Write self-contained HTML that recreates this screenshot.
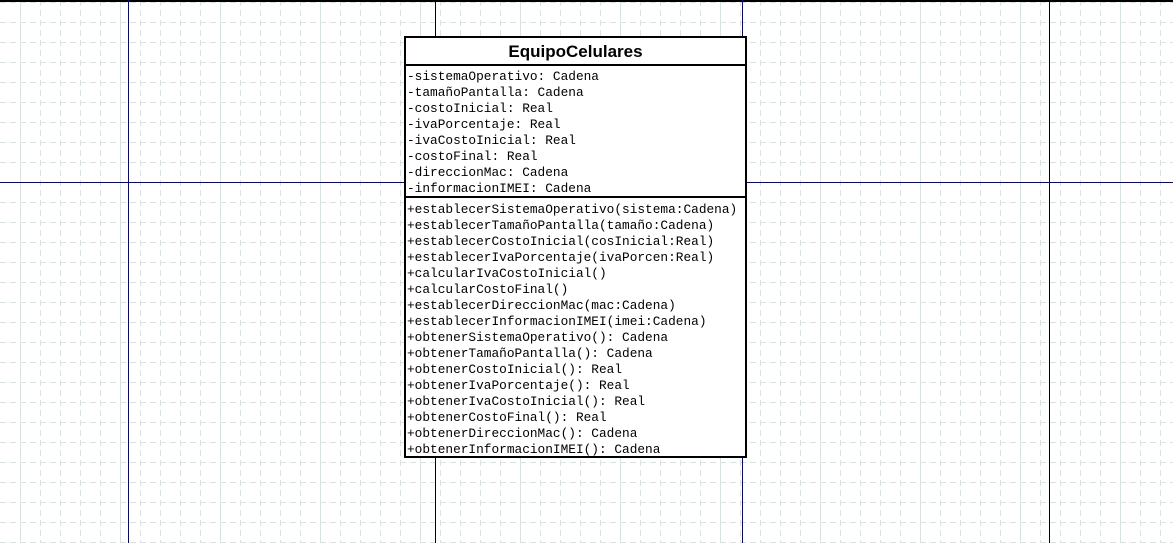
<!DOCTYPE html>
<html><head><meta charset="utf-8"><style>
html,body{margin:0;padding:0;background:#fff;width:1173px;height:543px;overflow:hidden;position:relative}
svg{position:absolute;left:0;top:0}
.box{position:absolute;left:404px;top:36px;width:339px;height:418px;border:2px solid #000;background:#fff}
.title{height:26px;border-bottom:2px solid #000;text-align:center;font:bold 17px "Liberation Sans",sans-serif;line-height:27px;color:#000}
.sec{font:12.8px "Liberation Mono",monospace;color:#000;line-height:16px;padding-left:1px;white-space:pre}
.attr{height:127px;padding-top:3px;border-bottom:2px solid #000;overflow:visible}
.meth{padding-top:4px}
</style></head><body>
<svg width="1173" height="543">
<g stroke="#d3e5e1" stroke-width="1" stroke-dasharray="6,4">
<path d="M0 2.5H1173M0 22.5H1173M0 42.5H1173M0 62.5H1173M0 82.5H1173M0 102.5H1173M0 122.5H1173M0 142.5H1173M0 162.5H1173M0 202.5H1173M0 222.5H1173M0 242.5H1173M0 262.5H1173M0 282.5H1173M0 302.5H1173M0 322.5H1173M0 342.5H1173M0 362.5H1173M0 382.5H1173M0 402.5H1173M0 422.5H1173M0 442.5H1173M0 462.5H1173M0 482.5H1173M0 502.5H1173M0 522.5H1173M0 542.5H1173"/>
<path d="M40.5 0V543M60.5 0V543M80.5 0V543M100.5 0V543M140.5 0V543M160.5 0V543M180.5 0V543M200.5 0V543M240.5 0V543M260.5 0V543M280.5 0V543M300.5 0V543M340.5 0V543M360.5 0V543M380.5 0V543M400.5 0V543M440.5 0V543M460.5 0V543M480.5 0V543M500.5 0V543M540.5 0V543M560.5 0V543M580.5 0V543M600.5 0V543M640.5 0V543M660.5 0V543M680.5 0V543M700.5 0V543M740.5 0V543M760.5 0V543M780.5 0V543M800.5 0V543M840.5 0V543M860.5 0V543M880.5 0V543M900.5 0V543M940.5 0V543M960.5 0V543M980.5 0V543M1000.5 0V543M1040.5 0V543M1060.5 0V543M1080.5 0V543M1100.5 0V543M1140.5 0V543M1160.5 0V543"/>
</g>
<g stroke="#d3e5e1" stroke-width="1">
<path d="M20.5 0V543M120.5 0V543M220.5 0V543M320.5 0V543M420.5 0V543M520.5 0V543M620.5 0V543M720.5 0V543M820.5 0V543M920.5 0V543M1020.5 0V543M1120.5 0V543"/>
</g>
<rect x="0" y="0" width="1173" height="2" fill="#000"/>
<g stroke="#000" stroke-width="1"><path d="M435.5 0V543M1049.5 0V543"/></g>
<g stroke="#0000b0" stroke-width="1"><path d="M128.5 0V543M742.5 0V543M0 182.5H1173"/></g>
</svg>
<div class="box">
<div class="title">EquipoCelulares</div>
<div class="sec attr">-sistemaOperativo: Cadena
-tamañoPantalla: Cadena
-costoInicial: Real
-ivaPorcentaje: Real
-ivaCostoInicial: Real
-costoFinal: Real
-direccionMac: Cadena
-informacionIMEI: Cadena</div>
<div class="sec meth">+establecerSistemaOperativo(sistema:Cadena)
+establecerTamañoPantalla(tamaño:Cadena)
+establecerCostoInicial(cosInicial:Real)
+establecerIvaPorcentaje(ivaPorcen:Real)
+calcularIvaCostoInicial()
+calcularCostoFinal()
+establecerDireccionMac(mac:Cadena)
+establecerInformacionIMEI(imei:Cadena)
+obtenerSistemaOperativo(): Cadena
+obtenerTamañoPantalla(): Cadena
+obtenerCostoInicial(): Real
+obtenerIvaPorcentaje(): Real
+obtenerIvaCostoInicial(): Real
+obtenerCostoFinal(): Real
+obtenerDireccionMac(): Cadena
+obtenerInformacionIMEI(): Cadena</div>
</div>
</body></html>
